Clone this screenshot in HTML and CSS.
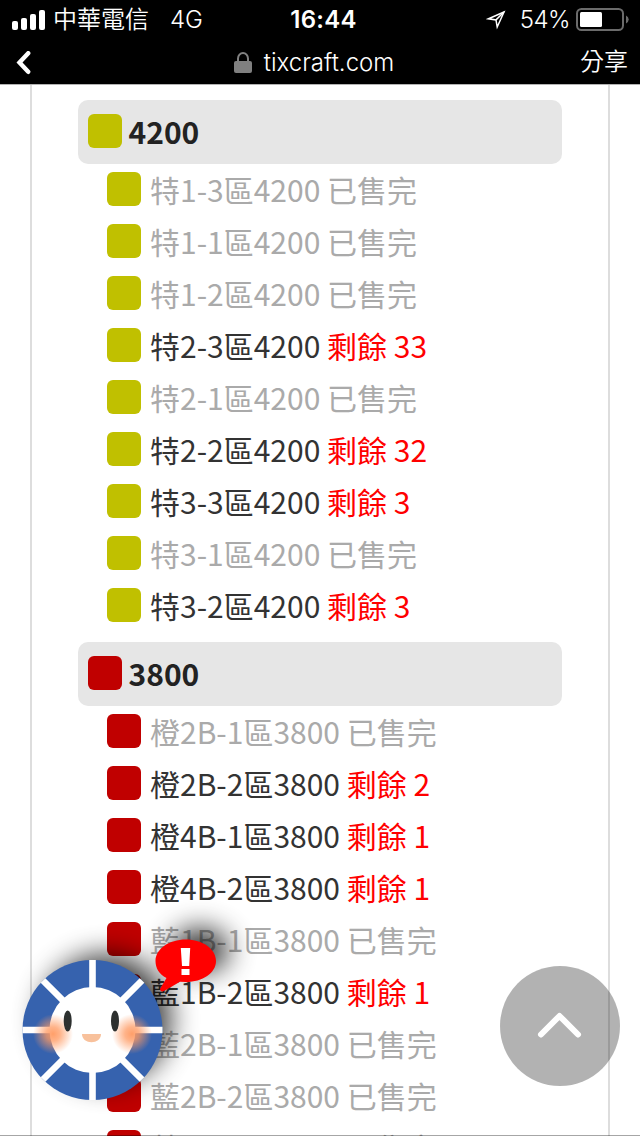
FILE: index.html
```
<!DOCTYPE html>
<html lang="zh-TW">
<head>
    <meta charset="UTF-8">
    <meta name="viewport" content="width=device-width, initial-scale=1.0">
    <title>tixcraft.com</title>
    <link rel="stylesheet" href="styles.css">
</head>
<body>
    <header class="topbar">
        <div class="status">
            <div class="status-left">
                <svg class="signal" width="34" height="20" viewBox="0 0 34 20" fill="#fff">
                    <rect x="0" y="11" width="6" height="9" rx="2"/>
                    <rect x="9" y="8" width="6" height="12" rx="2"/>
                    <rect x="18" y="4" width="6" height="16" rx="2"/>
                    <rect x="27" y="0" width="6" height="20" rx="2"/>
                </svg>
                <span class="carrier">中華電信</span>
                <span class="network">4G</span>
            </div>
            <span class="time">16:44</span>
            <div class="status-right">
                <svg class="location" width="20" height="20" viewBox="0 0 20 20" fill="none" stroke="#fff" stroke-width="1.5">
                    <path d="M18 2L2.5 8.8L10 9.9L11.2 17Z"/>
                    <path d="M10 9.9L18 2"/>
                </svg>
                <span class="percent">54%</span>
                <svg class="battery" width="53" height="24" viewBox="0 0 53 24">
                    <rect x="1" y="1" width="46" height="21" rx="4.5" fill="none" stroke="#6b6b6b" stroke-width="2"/>
                    <rect x="4" y="4" width="22" height="15" rx="1.5" fill="#fff"/>
                    <path d="M50 7.5Q52.7 9 52.7 11.5T50 15.5Z" fill="#6b6b6b"/>
                </svg>
            </div>
        </div>
        <nav class="navbar">
            <svg class="back" width="16" height="24" viewBox="0 0 16 24" fill="none" stroke="#fff" stroke-width="4.4" stroke-linecap="round">
                <path d="M13.2 2.2L4.5 11.5L13.2 20.8"/>
            </svg>
            <div class="site">
                <svg width="18" height="22" viewBox="0 0 18 22">
                    <path d="M4 11V6.5a5 5.5 0 0 1 10 0V11" fill="none" stroke="#808080" stroke-width="2"/>
                    <rect x="0" y="9" width="18" height="12" rx="2" fill="#808080"/>
                </svg>
                <span>tixcraft.com</span>
            </div>
            <span class="share">分享</span>
        </nav>
    </header>

    <main class="page">
        <section class="zone yellow">
            <h2 class="zone-title"><i class="swatch"></i>4200</h2>
            <ul class="area-list">
                <li class="soldout"><i class="swatch"></i>特1-3區4200 已售完</li>
                <li class="soldout"><i class="swatch"></i>特1-1區4200 已售完</li>
                <li class="soldout"><i class="swatch"></i>特1-2區4200 已售完</li>
                <li><i class="swatch"></i>特2-3區4200 <b>剩餘 33</b></li>
                <li class="soldout"><i class="swatch"></i>特2-1區4200 已售完</li>
                <li><i class="swatch"></i>特2-2區4200 <b>剩餘 32</b></li>
                <li><i class="swatch"></i>特3-3區4200 <b>剩餘 3</b></li>
                <li class="soldout"><i class="swatch"></i>特3-1區4200 已售完</li>
                <li><i class="swatch"></i>特3-2區4200 <b>剩餘 3</b></li>
            </ul>
        </section>
        <section class="zone red">
            <h2 class="zone-title"><i class="swatch"></i>3800</h2>
            <ul class="area-list">
                <li class="soldout"><i class="swatch"></i>橙2B-1區3800 已售完</li>
                <li><i class="swatch"></i>橙2B-2區3800 <b>剩餘 2</b></li>
                <li><i class="swatch"></i>橙4B-1區3800 <b>剩餘 1</b></li>
                <li><i class="swatch"></i>橙4B-2區3800 <b>剩餘 1</b></li>
                <li class="soldout"><i class="swatch"></i>藍1B-1區3800 已售完</li>
                <li><i class="swatch"></i>藍1B-2區3800 <b>剩餘 1</b></li>
                <li class="soldout"><i class="swatch"></i>藍2B-1區3800 已售完</li>
                <li class="soldout"><i class="swatch"></i>藍2B-2區3800 已售完</li>
                <li class="soldout"><i class="swatch"></i>藍3B-1區3800 已售完</li>
            </ul>
        </section>
    </main>

    <svg class="helper" width="280" height="236" viewBox="0 0 280 236">
        <defs>
            <radialGradient id="blush">
                <stop offset="0" stop-color="#ff9a62" stop-opacity="0.95"/>
                <stop offset="0.35" stop-color="#ff9a62" stop-opacity="0.75"/>
                <stop offset="1" stop-color="#ff9a62" stop-opacity="0"/>
            </radialGradient>
            <filter id="shade" x="-100%" y="-150%" width="300%" height="400%">
                <feGaussianBlur stdDeviation="14"/>
            </filter>
        </defs>
        <circle cx="106" cy="119" r="65" fill="#000" opacity="0.75" filter="url(#shade)"/>
        <ellipse cx="200" cy="50" rx="29" ry="22" fill="#000" opacity="0.8" filter="url(#shade)"/>
        <circle cx="92.5" cy="130" r="70" fill="#3662ae"/>
        <g stroke="#fff" stroke-width="6.6">
            <path d="M92.5 60V200M22.5 130H162.5"/>
            <path d="M43 80.5L142 179.5M142 80.5L43 179.5"/>
        </g>
        <circle cx="92.5" cy="130" r="43" fill="#fff"/>
        <circle cx="53" cy="134" r="20" fill="url(#blush)"/>
        <circle cx="132" cy="134" r="20" fill="url(#blush)"/>
        <ellipse cx="67.7" cy="121" rx="4" ry="10.5" fill="#2d302f"/>
        <ellipse cx="115" cy="121" rx="4" ry="10.5" fill="#2d302f"/>
        <path d="M82 134H101C101 145 82 145 82 134Z" fill="#f8c19c"/>
        <path d="M186 39.5C202.5 39.5 216 49 216 61C216 73 202.5 82 186 82L180 81.8L165 90.5Q160 93 160 89L166.5 78C159 74 155.5 68 155.5 61C155.5 49 169 39.5 186 39.5Z" fill="#f00"/>
        <path d="M180.8 48H190.2L189.2 66H182ZM181.5 69H189.5V75H181.5Z" fill="#fff"/>
    </svg>

    <div class="to-top">
        <svg width="46" height="28" viewBox="0 0 46 28" fill="none" stroke="#fff" stroke-width="6" stroke-linejoin="round" stroke-linecap="round">
            <path d="M4 22.5L22.5 4L41 22.5"/>
        </svg>
    </div>
</body>
</html>
```

FILE: styles.css
```
body {
    width: 640px;
    height: 1136px;
    margin: 0;
    overflow: hidden;
    position: relative;
    display: flex;
    flex-direction: column;
    background: #fff;
    color: #333;
    font-family: "Noto Sans CJK TC", sans-serif;
}

/* bottom edge of the web view */
body::after {
    content: "";
    position: absolute;
    left: 0;
    right: 0;
    bottom: 0;
    height: 1px;
    background: rgba(0, 0, 0, 0.35);
}

svg {
    display: block;
    flex: none;
}

.topbar {
    flex: none;
    height: 84px;
    background: #000;
    color: #fff;
    font-family: Inter, "Noto Sans CJK TC", sans-serif;
    font-size: 24px;
    border-bottom: 1px solid #b2b2b2;
}

.status, .navbar {
    display: grid;
    grid-template-columns: 1fr auto 1fr;
    align-items: center;
    box-sizing: border-box;
}

.status {
    height: 40px;
    padding: 0 11px 0 12px;
}

.status-left, .status-right {
    display: flex;
    align-items: center;
    line-height: 40px;
}

.status-right {
    justify-content: flex-end;
}

.carrier {
    margin-left: 7px;
    font-weight: 350;
}

.network {
    margin-left: 21px;
    font-weight: 350;
    letter-spacing: -0.2px;
}

.time {
    margin-right: -3px;
    padding-left: 3px;
    font-weight: 600;
    letter-spacing: 0.3px;
    line-height: 40px;
}

.location {
    margin-right: 14px;
}

.percent {
    margin-right: 6px;
    font-weight: 350;
    letter-spacing: -0.5px;
}

.navbar {
    height: 44px;
    padding: 0 12px 0 15px;
    line-height: 44px;
}

.site {
    display: flex;
    align-items: center;
    gap: 12px;
    margin: 1px 12px 0 -3px;
    font-weight: 350;
}

.share {
    justify-self: end;
    margin-bottom: 1px;
    font-weight: 350;
}

.page {
    flex: 1;
    min-height: 0;
    overflow: hidden;
    margin: 0 30px;
    padding: 15px 46px 0;
    border: solid #ddd;
    border-width: 0 2px;
}

.zone {
    margin-bottom: 10px;
}

.zone-title {
    display: flex;
    align-items: center;
    height: 64px;
    margin: 0;
    padding: 0 0 2px 10px;
    box-sizing: border-box;
    border-radius: 10px;
    background: #e6e6e6;
    color: #222;
    font-size: 30px;
    font-weight: 700;
}

.zone-title .swatch {
    margin-right: 6.5px;
}

.area-list {
    list-style: none;
    margin: 0;
    padding: 0 0 0 29px;
    font-size: 30px;
}

.area-list li {
    display: flex;
    align-items: center;
    height: 52px;
    padding-bottom: 2px;
    box-sizing: border-box;
    white-space: pre;
}

.area-list .swatch {
    margin-right: 9px;
}

.area-list .soldout {
    color: #aaa;
}

.area-list b {
    color: #f00;
    font-weight: 400;
}

.swatch {
    flex: none;
    width: 34px;
    height: 34px;
    border-radius: 6px;
}

.yellow .swatch {
    background: #c0c000;
}

.red .swatch {
    background: #c00000;
}

.helper {
    position: absolute;
    left: 0;
    top: 900px;
}

.to-top {
    position: absolute;
    left: 500px;
    top: 966px;
    width: 120px;
    height: 120px;
    display: flex;
    align-items: center;
    justify-content: center;
    border-radius: 50%;
    background: rgba(0, 0, 0, 0.3);
}
```
